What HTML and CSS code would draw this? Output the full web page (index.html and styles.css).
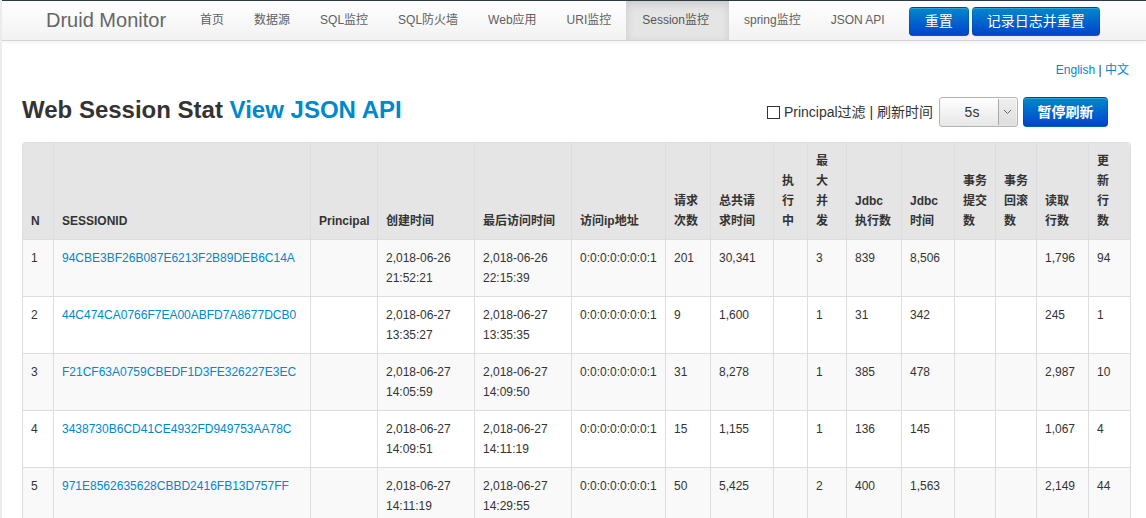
FILE: index.html
```html
<!DOCTYPE html>
<html lang="zh-CN">
<head>
<meta charset="utf-8">
<title>Druid Monitor</title>
<link rel="stylesheet" href="styles.css">
</head>
<body>
<div class="navbar">
  <div class="navbar-inner">
    <a class="brand" href="#">Druid Monitor</a>
    <ul class="nav">
      <li><a href="#">首页</a></li>
      <li><a href="#">数据源</a></li>
      <li><a href="#">SQL监控</a></li>
      <li><a href="#">SQL防火墙</a></li>
      <li><a href="#">Web应用</a></li>
      <li><a href="#">URI监控</a></li>
      <li class="active"><a href="#">Session监控</a></li>
      <li><a href="#">spring监控</a></li>
      <li><a href="#">JSON API</a></li>
    </ul>
    <div class="nav-btns">
      <a class="btn btn-primary btn-reset" href="#">重置</a>
      <a class="btn btn-primary" href="#">记录日志并重置</a>
    </div>
  </div>
</div>

<div class="container">
  <div class="lang"><a href="#">English</a> | <a href="#">中文</a></div>

  <div class="title-row">
    <h3 class="title">Web Session Stat <a href="#">View JSON API</a></h3>
    <div class="controls">
      <span class="checkbox"></span>
      <span class="ctl-label">Principal过滤 | 刷新时间</span>
      <div class="select">
        <span class="select-val">5s</span>
        <span class="select-arrow"><svg width="9" height="6" viewBox="0 0 9 6"><polyline points="1,1 4.5,4.5 8,1" fill="none" stroke="#666" stroke-width="1"/></svg></span>
      </div>
      <a class="btn btn-primary btn-pause" href="#">暂停刷新</a>
    </div>
  </div>

  <table class="table">
    <colgroup>
      <col class="c-n"><col class="c-sid"><col class="c-pr"><col class="c-date"><col class="c-date"><col class="c-ip">
      <col class="c-req"><col class="c-tot"><col class="c-run"><col class="c-max"><col class="c-jexe"><col class="c-jtime">
      <col class="c-tx"><col class="c-tx"><col class="c-read"><col class="c-upd">
    </colgroup>
    <thead>
      <tr>
        <th>N</th>
        <th>SESSIONID</th>
        <th>Principal</th>
        <th>创建时间</th>
        <th>最后访问时间</th>
        <th>访问ip地址</th>
        <th>请求<br>次数</th>
        <th>总共请<br>求时间</th>
        <th>执<br>行<br>中</th>
        <th>最<br>大<br>并<br>发</th>
        <th>Jdbc<br>执行数</th>
        <th>Jdbc<br>时间</th>
        <th>事务<br>提交<br>数</th>
        <th>事务<br>回滚<br>数</th>
        <th>读取<br>行数</th>
        <th>更<br>新<br>行<br>数</th>
      </tr>
    </thead>
    <tbody>
      <tr>
        <td>1</td><td><a href="#">94CBE3BF26B087E6213F2B89DEB6C14A</a></td><td></td>
        <td>2,018-06-26<br>21:52:21</td><td>2,018-06-26<br>22:15:39</td><td>0:0:0:0:0:0:0:1</td>
        <td>201</td><td>30,341</td><td></td><td>3</td><td>839</td><td>8,506</td><td></td><td></td><td>1,796</td><td>94</td>
      </tr>
      <tr>
        <td>2</td><td><a href="#">44C474CA0766F7EA00ABFD7A8677DCB0</a></td><td></td>
        <td>2,018-06-27<br>13:35:27</td><td>2,018-06-27<br>13:35:35</td><td>0:0:0:0:0:0:0:1</td>
        <td>9</td><td>1,600</td><td></td><td>1</td><td>31</td><td>342</td><td></td><td></td><td>245</td><td>1</td>
      </tr>
      <tr>
        <td>3</td><td><a href="#">F21CF63A0759CBEDF1D3FE326227E3EC</a></td><td></td>
        <td>2,018-06-27<br>14:05:59</td><td>2,018-06-27<br>14:09:50</td><td>0:0:0:0:0:0:0:1</td>
        <td>31</td><td>8,278</td><td></td><td>1</td><td>385</td><td>478</td><td></td><td></td><td>2,987</td><td>10</td>
      </tr>
      <tr>
        <td>4</td><td><a href="#">3438730B6CD41CE4932FD949753AA78C</a></td><td></td>
        <td>2,018-06-27<br>14:09:51</td><td>2,018-06-27<br>14:11:19</td><td>0:0:0:0:0:0:0:1</td>
        <td>15</td><td>1,155</td><td></td><td>1</td><td>136</td><td>145</td><td></td><td></td><td>1,067</td><td>4</td>
      </tr>
      <tr>
        <td>5</td><td><a href="#">971E8562635628CBBD2416FB13D757FF</a></td><td></td>
        <td>2,018-06-27<br>14:11:19</td><td>2,018-06-27<br>14:29:55</td><td>0:0:0:0:0:0:0:1</td>
        <td>50</td><td>5,425</td><td></td><td>2</td><td>400</td><td>1,563</td><td></td><td></td><td>2,149</td><td>44</td>
      </tr>
    </tbody>
  </table>
</div>
</body>
</html>
```

FILE: styles.css
```css
html, body {
  margin: 0;
  padding: 0;
}
body {
  background: #fff;
  border-left: 2px solid #ececec;
  font-family: "Liberation Sans", Arial, "Noto Sans CJK SC", sans-serif;
  font-size: 12px;
  line-height: 20px;
  color: #333;
  min-height: 518px;
  box-sizing: border-box;
}
a {
  color: #0088cc;
  text-decoration: none;
}

/* navbar */
.navbar {
  border-top: 1px solid #2e3b44;
}
.navbar-inner {
  display: flex;
  align-items: center;
  height: 39px;
  background: linear-gradient(to bottom, #ffffff, #f2f2f2);
  border-bottom: 1px solid #d4d4d4;
  box-shadow: 0 1px 4px rgba(0, 0, 0, 0.065);
}
.brand {
  margin-left: 44px;
  padding-right: 19px;
  font-size: 20px;
  line-height: 39px;
  color: #666;
}
.nav {
  display: flex;
  list-style: none;
  margin: 0;
  padding: 0;
  height: 39px;
}
.nav li a {
  display: block;
  padding: 0 15px;
  line-height: 39px;
  font-size: 12px;
  color: #606060;
}
.nav li.active a {
  padding: 0 20px 0 16px;
  background: #e5e5e5;
  color: #555;
  box-shadow: inset 0 3px 8px rgba(0, 0, 0, 0.125);
}
.nav-btns {
  display: flex;
  gap: 3px;
  margin-left: 9px;
  margin-top: 2px;
}
.btn {
  display: inline-block;
  box-sizing: border-box;
  height: 29px;
  padding: 0 14px;
  font-size: 14px;
  line-height: 27px;
  border-radius: 4px;
  text-align: center;
}
.btn-reset {
  padding: 0 15px;
}
.btn-primary {
  color: #fff;
  background: linear-gradient(to bottom, #0088cc, #0044cc);
  border: 1px solid #0044aa;
  border-color: rgba(0, 0, 0, 0.1) rgba(0, 0, 0, 0.1) rgba(0, 0, 0, 0.25);
  box-shadow: inset 0 1px 0 rgba(255, 255, 255, 0.2), 0 1px 2px rgba(0, 0, 0, 0.05);
}

/* content */
.container {
  padding: 0 16px 0 20px;
}
.lang {
  margin-top: 19px;
  text-align: right;
  padding-right: 1px;
  color: #333;
}
.title-row {
  display: flex;
  align-items: center;
  justify-content: space-between;
  margin-top: 17px;
  margin-bottom: 15px;
  height: 30px;
}
.title {
  margin: -4px 0 0 0;
  font-size: 24px;
  font-weight: bold;
  line-height: 30px;
  color: #333;
}
.controls {
  display: flex;
  align-items: center;
  margin-right: 22px;
  font-size: 14px;
}
.checkbox {
  display: inline-block;
  box-sizing: border-box;
  width: 13px;
  height: 13px;
  border: 1px solid #333;
  background: #fff;
  margin-right: 4px;
  margin-top: 1px;
}
.ctl-label {
  color: #333;
  line-height: 20px;
  margin-top: -1px;
}
.select {
  display: flex;
  box-sizing: border-box;
  width: 79px;
  height: 30px;
  margin-left: 6px;
  border: 1px solid #b3b3b3;
  border-radius: 3px;
  background: linear-gradient(to bottom, #ffffff, #e6e6e6);
  overflow: hidden;
}
.select-val {
  flex: 1;
  text-align: center;
  line-height: 28px;
  font-size: 14px;
  color: #333;
  padding-left: 6px;
}
.select-arrow {
  display: flex;
  align-items: center;
  justify-content: center;
  width: 17px;
  margin: 1px 1px 1px 0;
  border-left: 1px solid #a8a8a8;
  background: linear-gradient(to bottom, #efefef, #dedede);
}
.btn-pause {
  height: 30px;
  line-height: 28px;
  margin-left: 5px;
  width: 85px;
  padding: 0;
  font-weight: bold;
}

/* table */
.table {
  width: 1108px;
  table-layout: fixed;
  border-collapse: separate;
  border-spacing: 0;
  border: 1px solid #dddddd;
  border-left: 0;
  border-radius: 4px;
}
.c-n { width: 31px; }
.c-sid { width: 257px; }
.c-pr { width: 67px; }
.c-date { width: 97px; }
.c-ip { width: 94px; }
.c-req { width: 45px; }
.c-tot { width: 63px; }
.c-run { width: 34px; }
.c-max { width: 39px; }
.c-jexe { width: 55px; }
.c-jtime { width: 53px; }
.c-tx { width: 41px; }
.c-read { width: 52px; }
.c-upd { width: 42px; }

.table th,
.table td {
  padding: 8px;
  line-height: 20px;
  text-align: left;
  vertical-align: top;
  border-left: 1px solid #dddddd;
  border-top: 1px solid #dddddd;
  font-size: 12px;
  white-space: nowrap;
  overflow: hidden;
}
.table thead th {
  border-top: 0;
  background: #e5e5e5;
  font-weight: bold;
  vertical-align: bottom;
  color: #333;
}
.table thead th:first-child {
  border-top-left-radius: 4px;
}
.table thead th:last-child {
  border-top-right-radius: 4px;
}
.table tbody tr:nth-child(odd) td {
  background: #f9f9f9;
}
.table tbody tr:last-child td:first-child {
  border-bottom-left-radius: 4px;
}
.table tbody tr:last-child td:last-child {
  border-bottom-right-radius: 4px;
}
```
